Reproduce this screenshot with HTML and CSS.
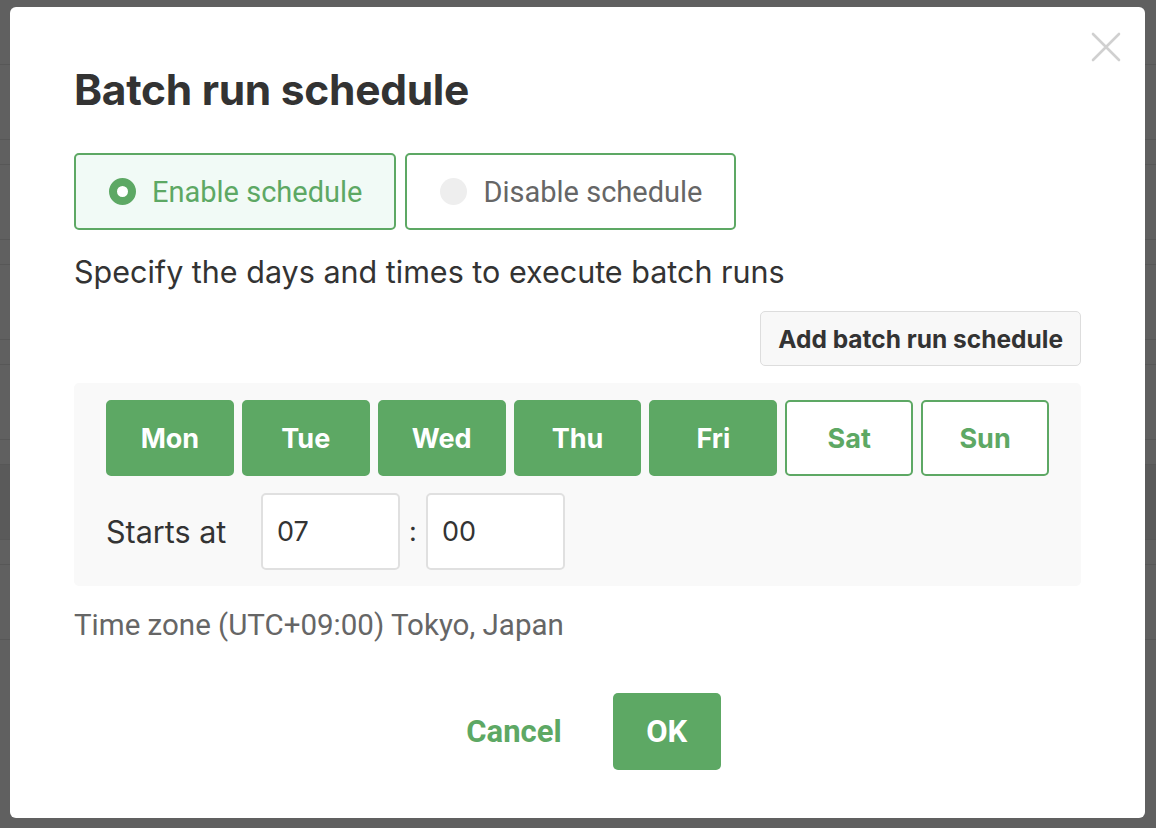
FILE: index.html
```html
<!DOCTYPE html>
<html lang="en">
<head>
    <meta charset="UTF-8">
    <meta name="viewport" content="width=device-width, initial-scale=1.0">
    <title>Batch run schedule</title>
    <link rel="stylesheet" href="styles.css">
</head>
<body>
    <div class="backdrop">
        <div class="bg-row"></div>
        <div class="bg-row"></div>
        <div class="bg-row"></div>
        <div class="bg-row"></div>
        <div class="bg-row dark"></div>
        <div class="bg-row"></div>
    </div>

    <div class="modal">
        <button class="close" aria-label="Close">
            <svg width="30" height="30" viewBox="0 0 30 30">
                <path d="M2 2 L28 28 M28 2 L2 28" stroke="#d0d0d0" stroke-width="2.6" stroke-linecap="round"/>
            </svg>
        </button>

        <h1>Batch run schedule</h1>

        <div class="toggle">
            <label class="option active">
                <span class="radio"></span>
                Enable schedule
            </label>
            <label class="option">
                <span class="radio"></span>
                Disable schedule
            </label>
        </div>

        <p class="hint">Specify the days and times to execute batch runs</p>

        <div class="add-row">
            <button class="add-btn">Add batch run schedule</button>
        </div>

        <div class="panel">
            <div class="days">
                <button class="day on">Mon</button>
                <button class="day on">Tue</button>
                <button class="day on">Wed</button>
                <button class="day on">Thu</button>
                <button class="day on">Fri</button>
                <button class="day">Sat</button>
                <button class="day">Sun</button>
            </div>
            <div class="start">
                <span class="start-label">Starts at</span>
                <input type="text" class="time" value="07">
                <span class="colon">:</span>
                <input type="text" class="time" value="00">
            </div>
        </div>

        <p class="zone">Time zone (UTC+09:00) Tokyo, Japan</p>

        <div class="footer">
            <button class="cancel">Cancel</button>
            <button class="ok">OK</button>
        </div>
    </div>
</body>
</html>
```

FILE: styles.css
```css
html {
    font-family: 'Inter', 'Liberation Sans', sans-serif;
}

body {
    margin: 0;
    width: 1156px;
    height: 828px;
    overflow: hidden;
    background: #606060;
    color: #333;
}

.backdrop {
    padding-top: 64px;
}

.bg-row {
    height: 74px;
    border-bottom: 1px solid #575757;
    border-top: 1px solid #575757;
    margin-bottom: 24px;
}

.bg-row.dark {
    background: #5a5a5a;
}

.modal {
    position: absolute;
    left: 10px;
    top: 7px;
    width: 1135px;
    height: 811px;
    box-sizing: border-box;
    background: #fff;
    border-radius: 6px;
    padding: 0 64px;
}

.close {
    position: absolute;
    top: 25px;
    right: 24px;
    background: none;
    border: none;
    padding: 0;
    cursor: pointer;
}

h1 {
    margin: 57px 0 0;
    font-size: 42.5px;
    font-weight: 700;
    line-height: 52px;
    letter-spacing: -0.3px;
    color: #333;
}

.toggle {
    display: flex;
    gap: 9px;
    margin-top: 37px;
}

.option {
    display: flex;
    align-items: center;
    height: 77px;
    box-sizing: border-box;
    border: 2px solid #5da864;
    border-radius: 5px;
    padding: 0 32px 0 33px;
    font-family: 'Roboto', 'Liberation Sans', sans-serif;
    font-size: 29px;
    color: #666;
    background: #fff;
}

.option.active {
    background: #f1faf6;
    color: #5da864;
}

.radio {
    width: 27px;
    height: 27px;
    border-radius: 50%;
    background: #eee;
    margin-right: 16px;
    box-sizing: border-box;
}

.option.active .radio {
    background: #fff;
    border: 8px solid #5da864;
}

.hint {
    margin: 24px 0 0;
    font-size: 30.5px;
    line-height: 36px;
    color: #333;
}

.add-row {
    display: flex;
    justify-content: flex-end;
    margin-top: 21px;
}

.add-btn {
    height: 55px;
    padding: 0 17px;
    background: #f8f8f8;
    border: 1px solid #ddd;
    border-radius: 5px;
    font-family: inherit;
    font-size: 24.5px;
    font-weight: 700;
    color: #333;
}

.panel {
    margin-top: 17px;
    background: #f9f9f9;
    border-radius: 5px;
    padding: 17px 32px 16px;
}

.days {
    display: flex;
    gap: 8px;
}

.day {
    width: 128px;
    height: 76px;
    box-sizing: border-box;
    border: 2px solid #5da864;
    border-radius: 5px;
    background: #fff;
    color: #5da864;
    font-family: inherit;
    font-size: 27px;
    font-weight: 700;
}

.day.on {
    background: #5da864;
    color: #fff;
}

.start {
    display: flex;
    align-items: center;
    margin-top: 17px;
}

.start-label {
    font-size: 30.5px;
    width: 155px;
}

.time {
    width: 139px;
    height: 77px;
    box-sizing: border-box;
    border: 2px solid #e0e0e0;
    border-radius: 5px;
    padding: 0 14px;
    font-family: inherit;
    font-size: 27px;
    color: #333;
    background: #fff;
}

.colon {
    width: 26px;
    text-align: center;
    font-size: 27px;
}

.zone {
    margin: 22px 0 0;
    font-family: 'Roboto', 'Liberation Sans', sans-serif;
    font-size: 29.5px;
    line-height: 34px;
    color: #666;
}

.footer {
    display: flex;
    justify-content: center;
    align-items: center;
    gap: 27px;
    margin-top: 51px;
    padding-left: 8px;
}

.cancel {
    background: none;
    border: none;
    padding: 0 24px;
    font-family: 'Roboto', 'Liberation Sans', sans-serif;
    font-size: 31px;
    font-weight: 700;
    color: #5da864;
}

.ok {
    width: 108px;
    height: 77px;
    border: none;
    border-radius: 5px;
    background: #5da864;
    color: #fff;
    font-family: 'Roboto', 'Liberation Sans', sans-serif;
    font-size: 31px;
    font-weight: 700;
}
```
